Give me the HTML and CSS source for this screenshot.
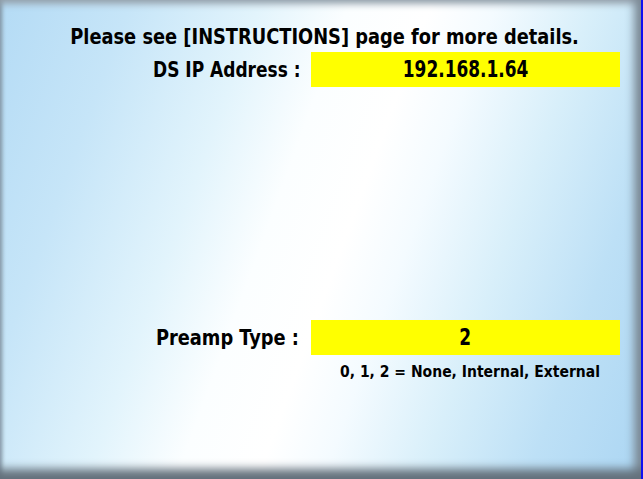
FILE: index.html
```html
<!DOCTYPE html>
<html>
<head>
<meta charset="utf-8">
<link rel="stylesheet" href="styles.css">
</head>
<body>
<div class="frame">
  <div class="title"><span class="narrow">Please see [INSTRUCTIONS] page for more details.</span></div>
  <div class="row row-ip">
    <div class="label"><span class="narrow">DS IP Address :</span></div>
    <div class="value"><span class="narrow-val">192.168.1.64</span></div>
  </div>
  <div class="row row-preamp">
    <div class="label"><span class="narrow">Preamp Type :</span></div>
    <div class="value"><span class="narrow-val">2</span></div>
  </div>
  <div class="row">
    <div></div>
    <div class="note"><span class="narrow-note">0, 1, 2 = None, Internal, External</span></div>
  </div>
</div>
</body>
</html>
```
FILE: styles.css
```css
html, body {
  margin: 0;
  padding: 0;
  width: 643px;
  height: 479px;
  overflow: hidden;
}
.frame {
  box-sizing: border-box;
  width: 643px;
  height: 479px;
  border-right: 2px solid #1010f0;
  background:
    linear-gradient(110deg, #b4dbf5 0%, #c6e5f8 16%, #e2f4fc 32%, #fbfeff 43%, #ffffff 53%, #f4fbff 61%, #d8effa 73%, #bde0f6 86%, #acd6f3 100%);
  box-shadow:
    inset 0 -16px 10px -6px #64717c,
    inset -12px 0 8px -5px #7e8c98,
    inset 0 9px 7px -5px #98a5b0,
    inset 5px 0 4px -3px #8496a4;
  font-family: "Liberation Sans Narrow", "DejaVu Sans Condensed", "Arial Narrow", sans-serif;
  font-weight: bold;
  color: #000;
  padding-top: 24px;
}
.narrow {
  display: inline-block;
  transform: scaleX(0.9);
}
.label .narrow {
  transform-origin: right center;
}
.narrow-val {
  display: inline-block;
  transform: scaleX(0.82);
}
.narrow-note {
  display: inline-block;
  transform: scaleX(0.97);
}
.title {
  text-align: center;
  font-size: 22px;
  line-height: 26px;
  padding-left: 8px;
  white-space: nowrap;
}
.row {
  display: grid;
  grid-template-columns: 301px 309px;
  column-gap: 10px;
  align-items: center;
}
.row-ip {
  margin-top: 2px;
}
.row-preamp {
  margin-top: 233px;
  grid-template-columns: 299px 309px;
  column-gap: 12px;
}
.label {
  text-align: right;
  font-size: 22px;
  white-space: nowrap;
}
.row-ip .label .narrow {
  transform: scaleX(0.86);
}
.value {
  background: #ffff00;
  height: 35px;
  line-height: 35px;
  text-align: center;
  font-size: 23px;
  white-space: nowrap;
}
.note {
  text-align: center;
  font-size: 16px;
  line-height: 34px;
  padding-left: 8px;
  white-space: nowrap;
}
```
